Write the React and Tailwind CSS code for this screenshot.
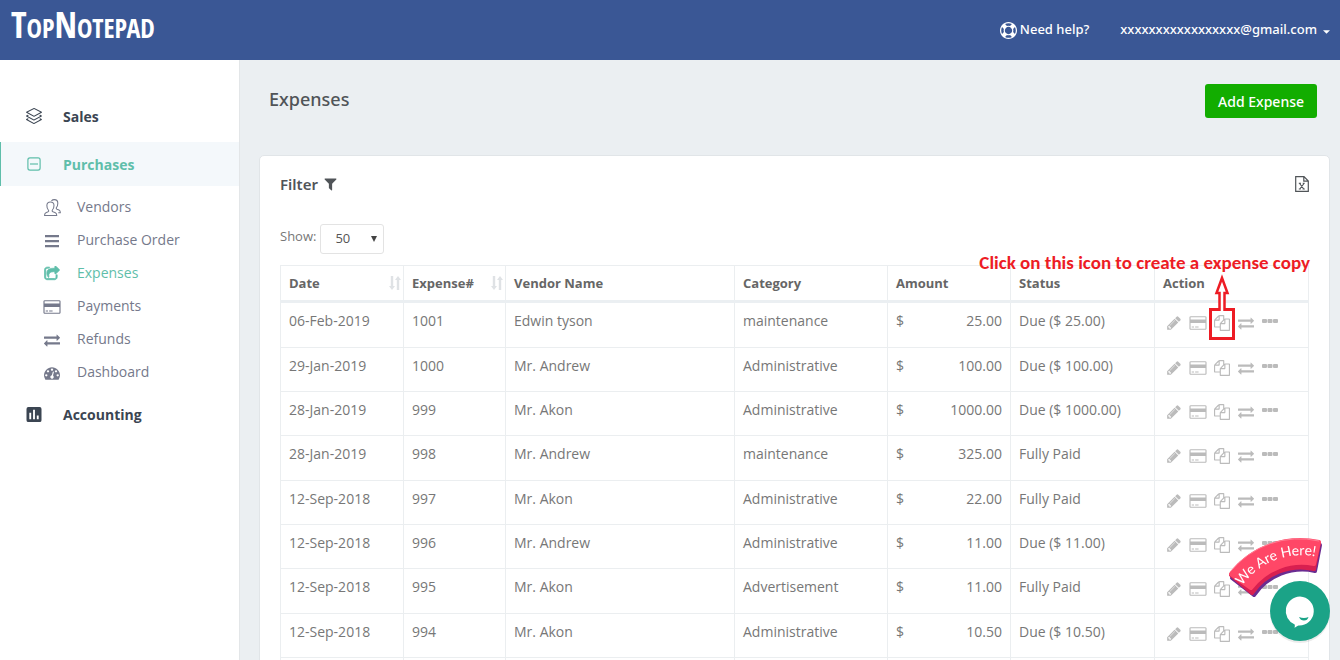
import React from "react";
import { SlLayers } from "react-icons/sl";

const PATHS = {
  pencil: ["0 0 1792 1792", "M491 1536l91-91-235-235-91 91v107h128v128h107zm523-928q0-22-22-22-10 0-17 7l-542 542q-7 7-7 17 0 22 22 22 10 0 17-7l542-542q7-7 7-17zm-54-192l416 416-832 832h-416v-416zm683 96q0 53-37 90l-166 166-416-416 166-165q36-38 90-38 53 0 91 38l235 234q37 39 37 91z"],
  card: ["0 0 1920 1792", "M1760 128q66 0 113 47t47 113v1216q0 66-47 113t-113 47h-1600q-66 0-113-47t-47-113v-1216q0-66 47-113t113-47h1600zm-1600 128q-13 0-22.5 9.5t-9.5 22.5v224h1664v-224q0-13-9.5-22.5t-22.5-9.5h-1600zm1600 1280q13 0 22.5-9.5t9.5-22.5v-608h-1664v608q0 13 9.5 22.5t22.5 9.5h1600zm-1504-128v-128h256v128h-256zm384 0v-128h384v128h-384z"],
  copy: ["0 0 1792 1792", "M1696 384q40 0 68 28t28 68v1216q0 40-28 68t-68 28h-960q-40 0-68-28t-28-68v-288h-544q-40 0-68-28t-28-68v-672q0-40 20-88t48-76l408-408q28-28 76-48t88-20h416q40 0 68 28t28 68v328q68-40 128-40h416zm-544 213l-299 299h299v-299zm-640-384l-299 299h299v-299zm196 647l316-316v-416h-384v416q0 40-28 68t-68 28h-416v640h512v-256q0-40 20-88t48-76zm956 804v-1152h-384v416q0 40-28 68t-68 28h-416v640h896z"],
  exchange: ["0 0 1792 1792", "M1792 1184v192q0 13-9.5 22.5t-22.5 9.5h-1376v192q0 13-9.5 22.5t-22.5 9.5q-12 0-24-10l-319-320q-9-9-9-22 0-14 9-23l320-320q9-9 23-9 13 0 22.5 9.5t9.5 22.5v192h1376q13 0 22.5 9.5t9.5 22.5zm0-544q0 14-9 23l-320 320q-9 9-23 9-13 0-22.5-9.5t-9.5-22.5v-192h-1376q-13 0-22.5-9.5t-9.5-22.5v-192q0-13 9.5-22.5t22.5-9.5h1376v-192q0-14 9-23t23-9q12 0 24 10l319 319q9 9 9 23z"],
  gauge: ["0 0 1792 1792", "M384 1152q0-53-37.5-90.5t-90.5-37.5-90.5 37.5-37.5 90.5 37.5 90.5 90.5 37.5 90.5-37.5 37.5-90.5zm192-448q0-53-37.5-90.5t-90.5-37.5-90.5 37.5-37.5 90.5 37.5 90.5 90.5 37.5 90.5-37.5 37.5-90.5zm428 481l101-382q6-26-7.5-48.5t-38.5-29.5-48 6.5-30 39.5l-101 382q-60 5-107 43.5t-63 98.5q-20 77 20 146t117 89 146-20 89-117q16-60-6-117t-72-91zm660-33q0-53-37.5-90.5t-90.5-37.5-90.5 37.5-37.5 90.5 37.5 90.5 90.5 37.5 90.5-37.5 37.5-90.5zm-640-640q0-53-37.5-90.5t-90.5-37.5-90.5 37.5-37.5 90.5 37.5 90.5 90.5 37.5 90.5-37.5 37.5-90.5zm448 192q0-53-37.5-90.5t-90.5-37.5-90.5 37.5-37.5 90.5 37.5 90.5 90.5 37.5 90.5-37.5 37.5-90.5zm320 448q0 261-141 483-19 29-54 29h-1402q-35 0-54-29-141-221-141-483 0-182 71-348t191-286 286-191 348-71 348 71 286 191 191 286 71 348z"],
  share: ["0 0 1792 1792", "M1472 989v259q0 119-84.5 203.5t-203.5 84.5h-832q-119 0-203.5-84.5t-84.5-203.5v-832q0-119 84.5-203.5t203.5-84.5h255q13 0 22.5 9.5t9.5 22.5q0 27-26 32-77 26-133 60-10 4-16 4h-112q-66 0-113 47t-47 113v832q0 66 47 113t113 47h832q66 0 113-47t47-113v-214q0-19 18-29 28-13 54-37 16-16 35-8 21 9 21 29zm237-496l-384 384q-18 19-45 19-12 0-25-5-39-17-39-59v-192h-160q-323 0-438 131-119 137-74 473 3 23-20 34-8 2-12 2-16 0-26-13-10-14-21-31t-39.5-68.5-49.5-99.5-38.5-114-17.5-122q0-49 3.5-91t14-90 28-88 47-81.5 68.5-74 94.5-61.5 124.5-48.5 159.5-30.5 196.5-11h160v-192q0-42 39-59 13-5 25-5 26 0 45 19l384 384q19 19 19 45t-19 45z"],
  filter: ["192 192 1408 1536", "M1595 295q17 41-14 70l-493 493v742q0 42-39 59-13 5-25 5-27 0-45-19l-256-256q-19-19-19-45v-486l-493-493q-31-29-14-70 17-39 59-39h1280q42 0 59 39z"],
  ring: ["0 0 1792 1792", "M896 0q182 0 348 71t286 191 191 286 71 348-71 348-191 286-286 191-348 71-348-71-286-191-191-286-71-348 71-348 191-286 286-191 348-71zm0 128q-190 0-361 90l194 194q82-28 167-28t167 28l194-194q-171-90-361-90zm-678 1129l194-194q-28-82-28-167t28-167l-194-194q-90 171-90 361t90 361zm678 407q190 0 361-90l-194-194q-82 28-167 28t-167-28l-194 194q171 90 361 90zm0-384q159 0 271.5-112.5t112.5-271.5-112.5-271.5-271.5-112.5-271.5 112.5-112.5 271.5 112.5 271.5 271.5 112.5zm484-217l194 194q90-171 90-361t-90-361l-194 194q28 82 28 167t-28 167z"],
  dots: ["0 0 16 16", "M1 4h3q1 0 1 1v2q0 1-1 1h-3q-1 0-1-1v-2q0-1 1-1zM6.500 4h3q1 0 1 1v2q0 1-1 1h-3q-1 0-1-1v-2q0-1 1-1zM12 4h3q1 0 1 1v2q0 1-1 1h-3q-1 0-1-1v-2q0-1 1-1z"],
  bars: ["0 0 16 16", "M1 2h14v2.200h-14zM1 7h14v2.200h-14zM1 12h14v2.200h-14z"],
  chart: ["0 0 16 16", "M2 0h12q2 0 2 2v12q0 2-2 2h-12q-2 0-2-2v-12q0-2 2-2zM3 6v7h2v-7zM7 3v10h2v-10zM11 9v4h2v-4z"],
};

function Icon({ name, className }) {
  const [viewBox, d] = PATHS[name];
  return (
    <svg
      viewBox={viewBox}
      className={className}
      fill="currentColor"
      fillRule={name === "chart" ? "evenodd" : "nonzero"}
      stroke={name === "share" ? "currentColor" : "none"}
      strokeWidth="90"
      aria-hidden="true"
    >
      <path d={d} />
    </svg>
  );
}

function PeopleIcon({ className }) {
  return (
    <svg viewBox="0 0 16 16" className={className} fill="none" stroke="currentColor" strokeWidth="1" strokeLinejoin="round" aria-hidden="true">
      <path d="M4.200 10.600C3 9.300 2.700 7.500 2.700 6 2.700 4 4 2.800 6 2.800s3.400 1.200 3.400 3.200c0 1.500-.4 3.300-1.600 4.600-.3.700 0 1.200.7 1.500l2.200.8c.9.400 1.300 1 1.300 2.600H.5c0-1.600.4-2.200 1.300-2.600l2-.8c.7-.3.800-.8.4-1.500z" />
      <path d="M7 1.800C7.700 1 8.600.6 9.700.6c2 0 3.300 1.300 3.300 3.300 0 1.400-.4 3-1.400 4.200-.3.700 0 1.200.6 1.500l1.900.8c.9.400 1.300 1 1.300 2.500h-2" />
    </svg>
  );
}

function MinusSquare({ className }) {
  return (
    <svg viewBox="0 0 14 14" className={className} fill="none" stroke="currentColor" strokeWidth="1.200" aria-hidden="true">
      <rect x="0.900" y="0.900" width="12.200" height="12.200" rx="2" />
      <path d="M3 7h8" />
    </svg>
  );
}

function ExcelIcon({ className }) {
  return (
    <svg viewBox="0 0 14 16" className={className} fill="none" stroke="currentColor" strokeWidth="1.200" aria-hidden="true">
      <path d="M.7.700h8.300L13.300 5v10.300H.7zM8.800.8v4.400h4.400" />
      <path d="M4.600 7.500l4.200 5.500M9 7.500L4.800 13M3.800 7.300h2.200M7.700 7.300h2M3.800 13h2M7.600 13h2.200" strokeWidth="1.100" />
    </svg>
  );
}

function SortIcon() {
  return (
    <svg viewBox="0 0 12 14" className="h-[14px] w-3 text-[#dfe2e5]" fill="currentColor" aria-hidden="true">
      <path d="M1.800 0h2.400v10H6l-3 4-3-4h1.800zM7.800 14h2.400V4H12L9 0 6 4h1.800z" />
    </svg>
  );
}

const SUB_ITEMS = [
  ["Vendors", null],
  ["Purchase Order", "bars"],
  ["Expenses", "share"],
  ["Payments", "card"],
  ["Refunds", "exchange"],
  ["Dashboard", "gauge"],
];

const COLUMNS = ["Date", "Expense#", "Vendor Name", "Category", "Amount", "Status", "Action"];

const ROWS = [
  ["06-Feb-2019", "1001", "Edwin tyson", "maintenance", "25.00", "Due ($ 25.00)"],
  ["29-Jan-2019", "1000", "Mr. Andrew", "Administrative", "100.00", "Due ($ 100.00)"],
  ["28-Jan-2019", "999", "Mr. Akon", "Administrative", "1000.00", "Due ($ 1000.00)"],
  ["28-Jan-2019", "998", "Mr. Andrew", "maintenance", "325.00", "Fully Paid"],
  ["12-Sep-2018", "997", "Mr. Akon", "Administrative", "22.00", "Fully Paid"],
  ["12-Sep-2018", "996", "Mr. Andrew", "Administrative", "11.00", "Due ($ 11.00)"],
  ["12-Sep-2018", "995", "Mr. Akon", "Advertisement", "11.00", "Fully Paid"],
  ["12-Sep-2018", "994", "Mr. Akon", "Administrative", "10.50", "Due ($ 10.50)"],
];

const ACTIONS = [
  ["Edit", "pencil", "h-4 w-4"],
  ["Pay", "card", "h-4 w-[18px]"],
  ["Copy", "copy", "h-4 w-4"],
  ["Refund", "exchange", "h-4 w-4"],
  ["More", "dots", "h-4 w-4"],
];

function Callout() {
  return (
    <span className="pointer-events-none absolute -inset-x-[3px] -bottom-[7px] -top-[5px] border-3 border-[#ed1c24]">
      <svg viewBox="0 0 16 36" className="absolute bottom-full left-1/2 h-9 w-4 -translate-x-1/2 overflow-visible" fill="#fff" stroke="#ed1c24" strokeWidth="2.500" aria-hidden="true">
        <path d="M5.500 36V18H2.500L8 3l5.500 15h-3V36" />
      </svg>
      <span className="absolute -right-[78px] bottom-[64px] whitespace-nowrap font-[Carlito,Calibri,Lato,sans-serif] text-[19px] font-bold leading-5 text-[#ed1c24]">
        Click on this icon to create a expense copy
      </span>
    </span>
  );
}

function Header() {
  return (
    <header className="flex h-[60px] shrink-0 items-center justify-between bg-[#3a5795] pl-[11px] pr-[10px] font-['Noto_Sans',sans-serif] text-[13px] font-medium text-white">
      <a href="#home" className="mb-2 font-['Liberation_Sans_Narrow','Open_Sans_Condensed','Liberation_Sans',sans-serif] text-[36px] font-bold leading-10">
        T<span className="text-[26px]">OP</span>N<span className="text-[26px]">OTEPAD</span>
      </a>
      <nav className="flex items-center gap-[31px]">
        <a href="#help" className="flex items-center gap-[3px]">
          <Icon name="ring" className="h-[17px] w-[17px]" />
          Need help?
        </a>
        <button type="button" className="flex items-center gap-[6px]">
          xxxxxxxxxxxxxxxxx@gmail.com
          <svg viewBox="0 0 8 4" className="mt-[3px] h-1 w-[7px]" fill="currentColor" aria-hidden="true"><path d="M0 0h8L4 4z" /></svg>
        </button>
      </nav>
    </header>
  );
}

function Sidebar() {
  return (
    <nav className="w-60 shrink-0 border-r border-[#e3e6e8] bg-white pt-[34px] text-[14px]">
      <a href="#sales" className="mb-1 flex h-11 items-center pl-[26px] font-bold text-[#3b4552]">
        <SlLayers className="mr-[21px] h-4 w-4" />
        Sales
      </a>
      <a href="#purchases" className="flex h-11 items-center border-l border-[#5fbeaa] bg-[#f4f8fb] pl-[26px] font-bold text-[#5fbeaa]">
        <MinusSquare className="mr-[22px] h-[14px] w-[14px]" />
        Purchases
      </a>
      <ul className="py-1">
        {SUB_ITEMS.map(([label, icon]) => (
          <li key={label}>
            <a href={"#" + label} className={"flex h-[33px] items-center pl-[43px] " + (label === "Expenses" ? "text-[#5fbeaa]" : "text-[#75798b]")}>
              <span className="mr-4 flex w-[18px] justify-center pt-[2px]">
                {icon ? (
                  <Icon name={icon} className={icon === "card" ? "h-4 w-[18px]" : "h-4 w-4"} />
                ) : (
                  <PeopleIcon className="h-[17px] w-[17px]" />
                )}
              </span>
              {label}
            </a>
          </li>
        ))}
      </ul>
      <a href="#accounting" className="flex h-11 items-center pl-[26px] font-bold text-[#3b4552]">
        <Icon name="chart" className="mr-[21px] h-[15px] w-4" />
        Accounting
      </a>
    </nav>
  );
}

function ExpenseTable() {
  const th = "border border-[#ebeef0] border-b-3 border-b-[#ebeff2] px-2 text-left text-[13px] font-bold text-[#666]";
  const td = "border border-[#ebeef0] px-2 pt-2 align-top";
  return (
    <table className="w-full table-fixed border-collapse text-[14px] leading-5 text-[#777]">
      <colgroup>
        <col className="w-[123px]" />
        <col className="w-[102px]" />
        <col />
        <col className="w-[153px]" />
        <col className="w-[123px]" />
        <col className="w-[144px]" />
        <col className="w-[154px]" />
      </colgroup>
      <thead>
        <tr className="h-9">
          {COLUMNS.map((name, i) => (
            <th key={name} scope="col" className={th}>
              <span className="-mr-[6px] flex items-center justify-between">
                {name}
                {i < 2 && <SortIcon />}
              </span>
            </th>
          ))}
        </tr>
      </thead>
      <tbody>
        {ROWS.map(([date, num, vendor, category, amount, status], i) => (
          <tr key={num} className={i === 0 ? "h-[46px]" : i % 3 === 0 ? "h-[45px]" : "h-11"}>
            <td className={td}>{date}</td>
            <td className={td}>{num}</td>
            <td className={td}>{vendor}</td>
            <td className={td}>{category}</td>
            <td className={td}>
              <span className="flex justify-between"><span>$</span><span>{amount}</span></span>
            </td>
            <td className={td}>{status}</td>
            <td className={td}>
              <span className="flex gap-1 pl-px pt-[2px] text-[#bbb]">
                {ACTIONS.map(([label, icon, size]) => (
                  <button key={label} type="button" aria-label={label} className="relative flex h-5 w-5 items-center justify-center">
                    <Icon name={icon} className={size} />
                    {i === 0 && icon === "copy" && <Callout />}
                  </button>
                ))}
              </span>
            </td>
          </tr>
        ))}
      </tbody>
      <tfoot>
        <tr className="h-11">
          {COLUMNS.map((name) => <td key={name} className={td} />)}
        </tr>
      </tfoot>
    </table>
  );
}

function ChatWidget() {
  return (
    <button type="button" aria-label="Open chat" className="fixed bottom-0 right-0">
      <svg viewBox="0 0 120 130" className="h-[130px] w-[120px]">
        <g strokeLinejoin="round" strokeWidth="4">
          <path d="M12 48A88 88 0 0 1 100 15L95 41A59 59 0 0 0 34 65z" fill="#6a2c91" stroke="#6a2c91" />
          <path d="M11 45A88 88 0 0 1 99 13L94 39A59 59 0 0 0 32 63z" fill="#d81f50" stroke="#d81f50" />
          <path d="M11 44A88 88 0 0 1 99 12L94 34A64 64 0 0 0 31 58z" fill="#ff4767" stroke="#ff4767" />
        </g>
        <path d="M10 42A89 89 0 0 1 99 11" fill="none" stroke="#ff7d92" strokeWidth="1" />
        <path id="chat-arc" d="M22 56A73 73 0 0 1 105 29" fill="none" />
        <text className="font-[Lato,sans-serif] text-[14px]" fill="#fff">
          <textPath href="#chat-arc" startOffset="0">We Are Here!</textPath>
        </text>
        <circle cx="80" cy="83" r="30" fill="#000" opacity="0.08" />
        <circle cx="80" cy="81" r="30" fill="#1ba387" />
        <path d="M80 66.500a14.500 14.500 0 1 1-1.500 29c-.6 0-2 1.500-4 2.200.4-1.200.5-2.400.2-3.300A14.500 14.500 0 0 1 80 66.500z" fill="#fff" />
        <path d="M79 87q5 2 9.500 0-1 3.500-4.500 3.500T79 87z" fill="#1ba387" />
      </svg>
    </button>
  );
}

export default function App() {
  return (
    <div className="flex h-screen flex-col overflow-hidden bg-[#ebeff2] font-['Open_Sans','Noto_Sans',sans-serif]">
      <Header />
      <div className="flex min-h-0 flex-1">
        <Sidebar />
        <main className="min-w-0 flex-1 overflow-hidden pl-[19px] pr-[10px]">
          <div className="flex items-center justify-between pb-[37px] pl-[10px] pr-[13px] pt-6">
            <h1 className="pb-1 font-['Noto_Sans',sans-serif] text-[18px] font-medium leading-6 text-[#505458]">Expenses</h1>
            <button type="button" className="h-[34px] rounded-[3px] bg-[#12ad00] px-[13px] font-['Noto_Sans',sans-serif] text-[14px] font-medium text-white">Add Expense</button>
          </div>
          <section className="rounded-[5px] border border-[#e1e5e8] bg-white px-5 pt-4">
            <div className="flex items-center justify-between">
              <h2 className="flex items-center gap-[6px] font-['Noto_Sans',sans-serif] text-[15px] font-semibold leading-6 text-[#505458]">
                Filter
                <Icon name="filter" className="h-[13px] w-[13px]" />
              </h2>
              <button type="button" aria-label="Export to Excel" className="text-[#505458]">
                <ExcelIcon className="h-4 w-[14px]" />
              </button>
            </div>
            <div className="mb-[11px] mt-7 flex items-center gap-1 text-[13px] text-[#777]">
              <label htmlFor="page-size" className="pb-1">Show:</label>
              <span className="relative flex items-center">
                <select id="page-size" defaultValue="50" className="h-[30px] w-16 appearance-none rounded-[3px] border border-[#e3e3e3] bg-white pl-[14px] text-[13px] text-[#555]">
                  <option>10</option>
                  <option>25</option>
                  <option>50</option>
                  <option>100</option>
                </select>
                <svg viewBox="0 0 6 6" className="pointer-events-none absolute right-[7px] h-[6px] w-[6px] text-[#444]" fill="currentColor" aria-hidden="true"><path d="M0 0h6L3 6z" /></svg>
              </span>
            </div>
            <ExpenseTable />
          </section>
        </main>
      </div>
      <ChatWidget />
    </div>
  );
}
